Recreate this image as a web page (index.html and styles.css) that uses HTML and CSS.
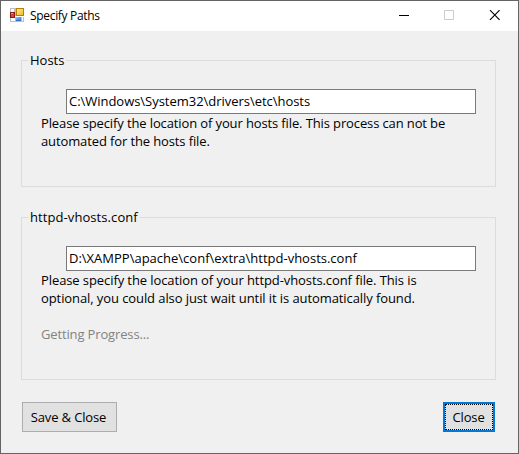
FILE: index.html
```html
<!DOCTYPE html>
<html lang="en">
<head>
<meta charset="utf-8">
<title>Specify Paths</title>
<link rel="stylesheet" href="styles.css">
</head>
<body>
<main class="window">
  <header class="titlebar">
    <svg class="app-icon" width="14" height="14" viewBox="0 0 14 14" shape-rendering="crispEdges">
      <defs>
        <linearGradient id="gold" x1="0" y1="0" x2="1" y2="1"><stop offset="0" stop-color="#fff0a0"/><stop offset="1" stop-color="#f3b51c"/></linearGradient>
        <linearGradient id="blue" x1="0" y1="0" x2="1" y2="1"><stop offset="0" stop-color="#91c2ff"/><stop offset="1" stop-color="#3e79df"/></linearGradient>
      </defs>
      <path fill="#bdbdbd" d="M0 0h14v14H0z"/>
      <path fill="#fff" d="M1 1h3v3H1zM1 10h4v3H1zM12 9h1v4h-1z"/>
      <path fill="#8b1717" d="M0 4h5v6H0z"/><path fill="#d34835" d="M1 5h3v4H1z"/><path fill="#f09a84" d="M1 5h2v1H1z"/>
      <path fill="#ba8100" d="M6 0h8v8H6z"/><path fill="url(#gold)" d="M7 1h6v6H7z"/>
      <path fill="#fff" d="M5 8h9v1H5z"/>
      <path fill="#386bc4" d="M6 9h5v4H6z"/><path fill="url(#blue)" d="M6 9h5v3H6z"/>
    </svg>
    <h1 class="title">Specify Paths</h1>
    <svg class="controls" width="102" height="12" viewBox="0 0 102 12" fill="none">
      <path stroke="#000" d="M0 5.5h10"/>
      <path stroke="#ccc" d="M45.500 .5h9v9h-9z"/>
      <path stroke="#000" stroke-width="1.150" d="M91 .2l9.600 9.600M100.600 .2L91 9.800"/>
    </svg>
  </header>
  <section class="group hosts">
    <h2 class="legend"><span>Hosts</span></h2>
    <div class="field">C:\Windows\System32\drivers\etc\hosts</div>
    <p class="note">Please specify the location of your hosts file. This process can not be<br>automated for the hosts file.</p>
  </section>
  <section class="group vhosts">
    <h2 class="legend"><span>httpd-vhosts.conf</span></h2>
    <div class="field">D:\XAMPP\apache\conf\extra\httpd-vhosts.conf</div>
    <p class="note">Please specify the location of your httpd-vhosts.conf file. This is<br>optional, you could also just wait until it is automatically found.</p>
    <p class="progress">Getting Progress...</p>
  </section>
  <footer class="actions">
    <button class="button save">Save &amp; Close</button>
    <button class="button close"><span class="focus"></span>Close</button>
  </footer>
</main>
</body>
</html>
```
FILE: styles.css
```css
* { box-sizing: border-box; }
body { margin: 0; font: 13px/18px "Open Sans", sans-serif; color: #000; overflow: hidden; }
h1, h2, p { margin: 0; font-weight: 400; }
.window { width: 519px; height: 454px; border: 1px solid #646464; background: #f0f0f0; }
.titlebar { display: flex; height: 30px; background: #fff; padding: 7px 0 0 9px; }
.app-icon { flex: none; }
.title { margin: -1px 0 0 6px; width: 368px; font-size: 12px; line-height: 18px; letter-spacing: -.32px; white-space: nowrap; }
.controls { flex: none; margin: 2px 0 0 1px; }
.group { width: 475px; margin-left: 20px; border: 1px solid #dcdcdc; padding: 0 19px; }
.hosts { height: 127px; margin-top: 29px; }
.vhosts { height: 163px; margin-top: 30px; }
.legend { height: 18px; margin: -10px 0 0 -13px; font-size: 13px; line-height: 18px; }
.legend span { display: inline-block; background: #f0f0f0; padding: 0 2px; }
.vhosts .legend { letter-spacing: .08px; }
.field { width: 410px; height: 25px; margin: 20px 0 0 25px; border: 1px solid #7a7a7a; background: #fff; padding: 0 2px; line-height: 23px; white-space: nowrap; }
.hosts .field { letter-spacing: -.03px; }
.note { white-space: nowrap; letter-spacing: -.09px; }
.hosts .note { letter-spacing: -.12px; }
.progress { margin-top: 18px; color: #838383; letter-spacing: -.14px; }
.actions { display: flex; justify-content: space-between; margin: 22px 23px 0 21px; }
.button { height: 30px; padding: 0; border: 1px solid #adadad; background: #e1e1e1; color: #000; font: inherit; letter-spacing: -.14px; white-space: nowrap; }
.save { width: 95px; padding-right: 2px; }
.close { position: relative; width: 52px; border: 2px solid #0078d7; padding-right: 1px; }
.focus { position: absolute; inset: 0; border: 1px dotted #000; }
```
